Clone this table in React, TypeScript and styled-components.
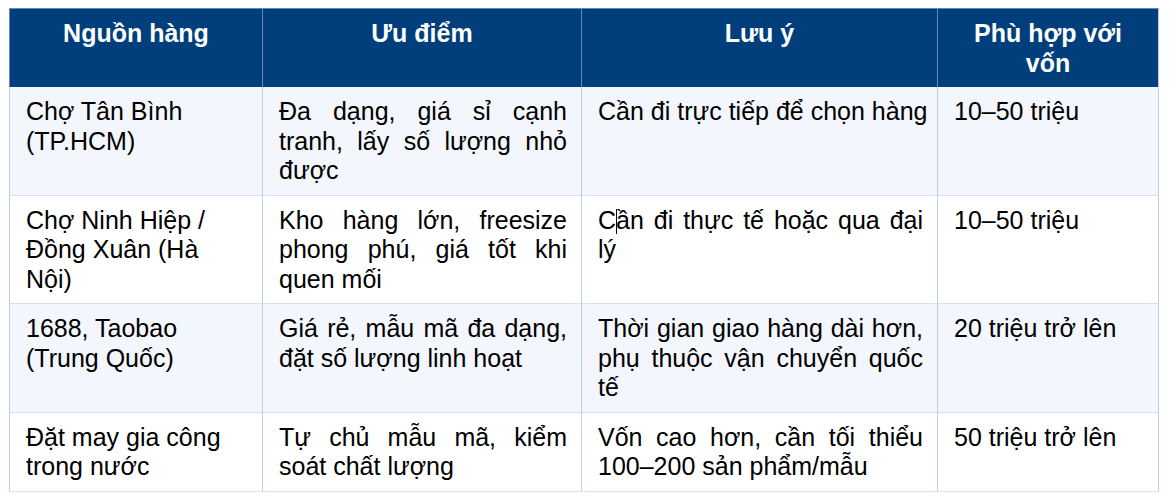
import styled, { createGlobalStyle } from "styled-components";

const HEADER_BG = "#003f7b";
const HEADER_LINE = "#6489b8";
const V_LINE = "#bccde9";
const H_LINE = "#d5e0f0";
const SHADE = "#f3f6fc";

const GlobalStyle = createGlobalStyle`
  body {
    margin: 0;
    background: #ffffff;
    font-family: "Liberation Sans", Arial, sans-serif;
  }
`;

const Page = styled.div`
  padding: 8px 0 0 9px;
`;

const Table = styled.table`
  border-collapse: separate;
  border-spacing: 0;
  table-layout: fixed;
  width: 1150px;
  font-family: "Liberation Sans", Arial, sans-serif;
  font-size: 25px;
  line-height: 29.5px;
  color: #000000;
`;

const HeadCell = styled.th<{ $width: number }>`
  box-sizing: border-box;
  width: ${(p) => p.$width}px;
  background: ${HEADER_BG};
  color: #ffffff;
  font-weight: bold;
  text-align: center;
  vertical-align: top;
  padding: 10px 15px 9px;
  border-top: 1px solid ${HEADER_LINE};
  border-right: 1px solid ${HEADER_LINE};
  &:first-child {
    border-left: 1px solid ${HEADER_LINE};
  }
  &:last-child {
    border-right-color: ${V_LINE};
  }
`;

const Row = styled.tr<{ $shaded?: boolean }>`
  background: ${(p) => (p.$shaded ? SHADE : "#ffffff")};
`;

const Cell = styled.td<{ $justify?: boolean; $nowrap?: boolean }>`
  box-sizing: border-box;
  text-align: ${(p) => (p.$justify ? "justify" : "left")};
  white-space: ${(p) => (p.$nowrap ? "nowrap" : "normal")};
  vertical-align: top;
  padding: 10px 14px 9px 16px;
  border-right: 1px solid ${V_LINE};
  border-bottom: 1px solid ${H_LINE};
  &:first-child {
    border-left: 1px solid ${V_LINE};
  }
`;

const Caret = styled.span`
  display: inline-block;
  width: 1px;
  height: 25px;
  margin-right: -1px;
  background: #000000;
  vertical-align: -5px;
`;

const rows = [
  {
    source: "Chợ Tân Bình (TP.HCM)",
    pros: "Đa dạng, giá sỉ cạnh tranh, lấy số lượng nhỏ được",
    note: "Cần đi trực tiếp để chọn hàng",
    budget: "10–50 triệu",
    oneLine: true,
  },
  {
    source: "Chợ Ninh Hiệp / Đồng Xuân (Hà Nội)",
    pros: "Kho hàng lớn, freesize phong phú, giá tốt khi quen mối",
    note: "caret",
    budget: "10–50 triệu",
  },
  {
    source: "1688, Taobao (Trung Quốc)",
    pros: "Giá rẻ, mẫu mã đa dạng, đặt số lượng linh hoạt",
    note: "Thời gian giao hàng dài hơn, phụ thuộc vận chuyển quốc tế",
    budget: "20 triệu trở lên",
  },
  {
    source: "Đặt may gia công trong nước",
    pros: "Tự chủ mẫu mã, kiểm soát chất lượng",
    note: "Vốn cao hơn, cần tối thiểu 100–200 sản phẩm/mẫu",
    budget: "50 triệu trở lên",
  },
];

export default function App() {
  return (
    <Page>
      <GlobalStyle />
      <Table>
        <thead>
          <tr>
            <HeadCell $width={254}>Nguồn hàng</HeadCell>
            <HeadCell $width={319}>Ưu điểm</HeadCell>
            <HeadCell $width={356}>Lưu ý</HeadCell>
            <HeadCell $width={221}>Phù hợp với vốn</HeadCell>
          </tr>
        </thead>
        <tbody>
          {rows.map((r, i) => (
            <Row key={i} $shaded={i % 2 === 0}>
              <Cell>{r.source}</Cell>
              <Cell $justify>{r.pros}</Cell>
              <Cell $justify $nowrap={r.oneLine}>
                {r.note === "caret" ? (
                  <>
                    C<Caret />ần đi thực tế hoặc qua đại lý
                  </>
                ) : (
                  r.note
                )}
              </Cell>
              <Cell>{r.budget}</Cell>
            </Row>
          ))}
        </tbody>
      </Table>
    </Page>
  );
}
